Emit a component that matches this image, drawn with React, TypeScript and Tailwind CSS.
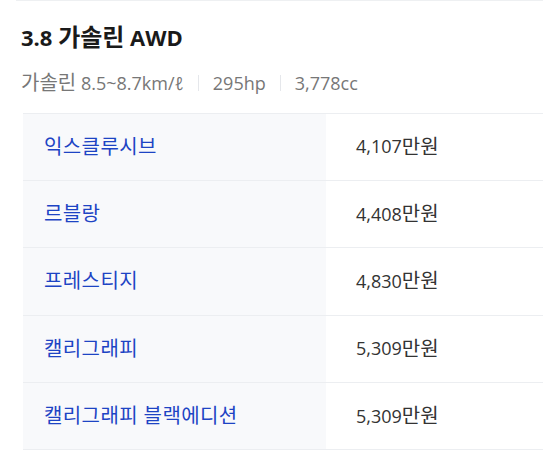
const rows = [
  { name: "익스클루시브", price: "4,107" },
  { name: "르블랑", price: "4,408" },
  { name: "프레스티지", price: "4,830" },
  { name: "캘리그래피", price: "5,309" },
  { name: "캘리그래피 블랙에디션", price: "5,309" },
];

export default function App() {
  return (
    <div
      className="h-[460px] w-[543px] overflow-hidden bg-white"
      style={{ fontFamily: '"Open Sans", "Noto Sans CJK KR", sans-serif' }}
    >
      <div className="ml-4 border-t border-[#eef0f2]" />
      <div className="pl-[21px] pt-[20px]">
        <h2 className="text-[22px] font-bold leading-[32px] text-[#1a1a1a]">
          3.8 <span className="text-[24px]">가솔린</span> AWD
        </h2>
        <div className="mt-[18px] flex items-center text-[18px] leading-[24px] text-[#777777]">
          <span>
            <span className="text-[20px]">가솔린</span> 8.5~8.7km/ℓ
          </span>
          <span className="mx-[14px] h-[16px] w-px bg-[#e5e7eb]" />
          <span>295hp</span>
          <span className="mx-[14px] h-[16px] w-px bg-[#e5e7eb]" />
          <span>3,778cc</span>
        </div>
      </div>
      <div className="ml-[23px] mt-[17.5px] border-t border-[#eceef1]">
        {rows.map((row) => (
          <div key={row.name} className="flex h-[67.4px] border-b border-[#eceef1]">
            <div className="flex w-[303px] items-center bg-[#f8f9fb] pl-[21px] text-[20px] tracking-[0.4px] text-[#1d44c4]">
              {row.name}
            </div>
            <div className="flex flex-1 items-center pl-[30px] text-[18px] text-[#333333]">
              {row.price}
              <span className="text-[20px]">만원</span>
            </div>
          </div>
        ))}
      </div>
    </div>
  );
}
